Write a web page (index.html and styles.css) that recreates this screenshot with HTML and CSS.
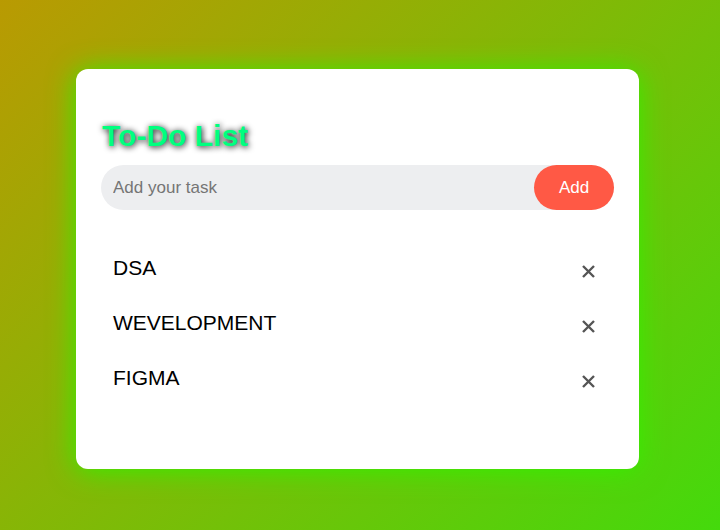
FILE: index.html
```html
<!DOCTYPE html>
<html lang="en">
<head>
<meta charset="utf-8">
<meta name="viewport" content="width=device-width, initial-scale=1">
<title>To-Do List</title>
<link rel="stylesheet" href="styles.css">
</head>
<body>
<main class="todo-app">
  <h1 class="title">To-Do List</h1>
  <form class="row">
    <input class="task-input" type="text" placeholder="Add your task" aria-label="Task">
    <button class="add" type="button">Add</button>
  </form>
  <ul class="tasks">
    <li class="task">DSA<button class="remove" type="button" aria-label="Remove DSA"><svg class="cross" viewBox="0 0 13 13"><path d="M1 1 12 12M12 1 1 12"/></svg></button></li>
    <li class="task">WEVELOPMENT<button class="remove" type="button" aria-label="Remove WEVELOPMENT"><svg class="cross" viewBox="0 0 13 13"><path d="M1 1 12 12M12 1 1 12"/></svg></button></li>
    <li class="task">FIGMA<button class="remove" type="button" aria-label="Remove FIGMA"><svg class="cross" viewBox="0 0 13 13"><path d="M1 1 12 12M12 1 1 12"/></svg></button></li>
  </ul>
</main>
</body>
</html>
```
FILE: styles.css
```css
* {
  box-sizing: border-box;
  margin: 0;
  padding: 0;
  font-family: "Liberation Sans", Arial, sans-serif;
}

body {
  min-height: 100vh;
  padding: 69px 81px 61px 76px;
  background: linear-gradient(135deg, #b99a02, #44da0c);
}

.todo-app {
  max-width: 680px;
  margin: 0 auto;
  padding: 49px 25px 64px;
  background: #fff;
  border-radius: 12px;
  box-shadow: 0 2px 28px #34f000;
}

.title {
  padding-left: 1px;
  margin-bottom: 11px;
  color: #00ff7f;
  font-size: 30px;
  line-height: 36px;
  text-shadow: 1px 1px 6px #000;
}

.row {
  display: flex;
  height: 45px;
  margin-bottom: 30px;
  background: #edeef0;
  border-radius: 30px;
}

.task-input {
  flex: 1;
  min-width: 0;
  padding: 0 12px;
  border: 0;
  outline: 0;
  background: transparent;
  font-size: 17px;
}

.add {
  width: 80px;
  border: 0;
  border-radius: 30px;
  background: #ff5945;
  color: #fff;
  font-size: 17px;
}

.tasks {
  list-style: none;
}

.task {
  display: flex;
  justify-content: space-between;
  padding: 0 12px;
  font-size: 21px;
  line-height: 55px;
}

.remove {
  display: flex;
  align-items: center;
  justify-content: center;
  width: 27px;
  padding-top: 8px;
  border: 0;
  background: transparent;
  color: #555;
}

.cross {
  width: 13px;
  height: 13px;
  fill: none;
  stroke: currentColor;
  stroke-width: 2.4;
}
```
